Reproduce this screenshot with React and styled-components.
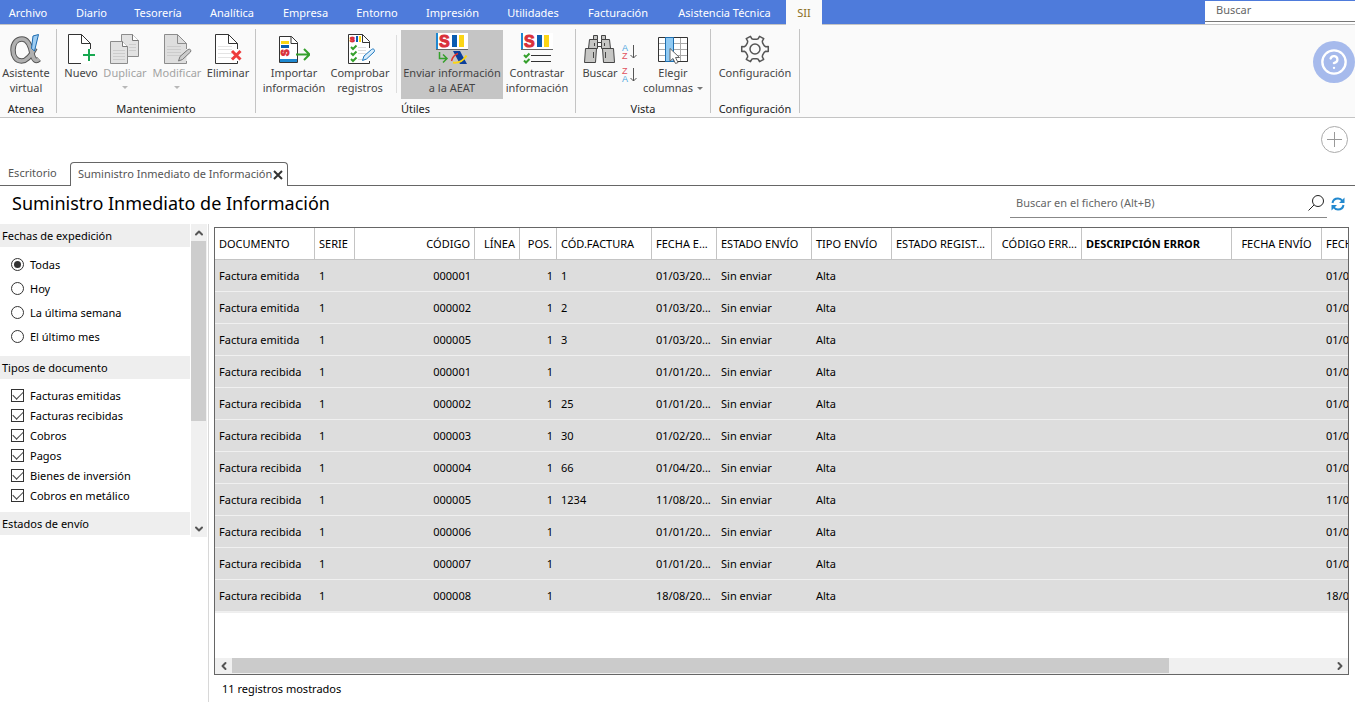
import React from 'react';
import styled, { createGlobalStyle, css } from 'styled-components';
import { CircleHelp, ChevronUp, ChevronDown, ChevronLeft, ChevronRight } from 'lucide-react';

const GlobalStyle = createGlobalStyle`
  * { box-sizing: border-box; }
  body {
    margin: 0;
    background: #fff;
    color: #000;
    font: 11px/15px "Noto Sans", "Open Sans", sans-serif;
  }
  button, input { font: inherit; color: inherit; }
  button { padding: 0; border: 0; background: none; cursor: pointer; }
`;

const Page = styled.div`
  display: flex;
  flex-direction: column;
  min-height: 100vh;
  overflow: hidden;
`;

/* Menu bar */
const MenuBar = styled.nav`
  display: flex;
  height: 25px;
  background: #4e7bdb;
  border-bottom: 1px solid #c4c4c4;
`;

const MenuTab = styled.button`
  flex: none;
  width: ${(p) => p.$width}px;
  height: 24px;
  color: #fff;
  white-space: nowrap;
  ${(p) => p.$first && css`padding-right: 6px;`}
  ${(p) => p.$active && css`
    height: 25px;
    background: #fafafa;
    color: #8a6d1c;
  `}
`;

const MenuSearch = styled.input`
  width: 150px;
  height: 21px;
  margin: 1px 0 0 auto;
  padding: 0 11px 3px;
  border: 0;
  border-bottom: 1px solid #777;
  border-radius: 0;
  box-shadow: 0 2px 0 #fff;
  background: #fff;
  outline: 0;
  &::placeholder { color: #666; opacity: 1; }
`;

/* Ribbon */
const Ribbon = styled.header`
  display: flex;
  height: 93px;
  background: #fafafa;
  border-bottom: 1px solid #c4c4c4;
`;

const Group = styled.section`
  display: flex;
  flex-direction: column;
  flex: none;
  padding: 5px ${(p) => (p.$edge ? '5px 0 1px' : '4px 0')};
`;

const GroupItems = styled.div`
  display: flex;
  height: 69px;
`;

const GroupTitle = styled.h2`
  margin: 2px 0 0;
  font-size: 11px;
  font-weight: 400;
  line-height: 15px;
  text-align: center;
  color: #222;
`;

const Divider = styled.span`
  flex: none;
  width: 1px;
  margin: ${(p) => (p.$inner ? '5px 4px 6px' : '4px 0')};
  background: ${(p) => (p.$inner ? '#ddd' : '#c4c4c4')};
`;

const Tool = styled.button`
  display: flex;
  flex-direction: column;
  align-items: center;
  flex: none;
  width: ${(p) => p.$width}px;
  padding-top: 3px;
  color: #444;
  white-space: nowrap;
  background: ${(p) => (p.$active ? '#c5c5c5' : 'transparent')};
  &:disabled { color: #a3a3a3; cursor: default; }
  svg { flex: none; }
`;

const Caret = styled.i`
  display: inline-block;
  margin: ${(p) => (p.$below ? '6px 0 0' : '0 0 2px 4px')};
  border: 3px solid transparent;
  border-top-color: ${(p) => (p.$below ? '#b8b8b8' : '#777')};
  border-bottom: 0;
`;

const SortTools = styled.div`
  display: flex;
  flex-direction: column;
  gap: 7px;
  width: 20px;
  padding-top: 14px;
  button { height: 16px; }
  svg { display: block; }
`;

const HelpButton = styled.button`
  display: grid;
  place-items: center;
  width: 42px;
  height: 42px;
  margin: 16px 0 0 auto;
  border-radius: 50%;
  background: #a6baec;
  color: #fff;
`;

/* Document tabs */
const TabStrip = styled.div`
  display: flex;
  justify-content: space-between;
  height: 68px;
  border-bottom: 1px solid #666;
`;

const DocTabs = styled.div`
  display: flex;
  align-items: flex-end;
`;

const DocTab = styled.button`
  display: flex;
  align-items: center;
  gap: 1px;
  height: 23px;
  padding: 0 4px 2px 7px;
  color: #555;
  white-space: nowrap;
  svg { flex: none; margin-top: 2px; }
  ${(p) => p.$home && css`width: 70px; padding-left: 8px;`}
  ${(p) => p.$active && css`
    height: 24px;
    width: 218px;
    margin-bottom: -1px;
    border: 1px solid #666;
    border-bottom: 0;
    border-radius: 4px 4px 0 0;
    background: #fff;
  `}
`;

const AddButton = styled.button`
  width: 27px;
  height: 27px;
  margin: 8px 7px 0 0;
`;

/* Title row */
const TitleRow = styled.div`
  display: flex;
  justify-content: space-between;
  height: 38px;
  padding: 0 10px 0 12px;
`;

const Title = styled.h1`
  margin: 0;
  font-size: 18px;
  font-weight: 400;
  line-height: 34px;
  white-space: nowrap;
`;

const FileSearch = styled.div`
  display: flex;
  align-items: center;
  gap: 4px;
  height: 32px;
`;

const SearchField = styled.label`
  display: flex;
  align-items: center;
  width: 317px;
  height: 32px;
  padding: 2px 3px 0 6px;
  border-bottom: 1px solid #888;
  input {
    flex: 1;
    min-width: 0;
    padding: 0;
    border: 0;
    outline: 0;
    background: none;
  }
  input::placeholder { color: #666; opacity: 1; }
`;

const RefreshButton = styled.button`
  height: 28px;
  padding-top: 6px;
`;

/* Work area */
const Work = styled.main`
  display: flex;
  flex: 1;
`;

const Sidebar = styled.aside`
  display: flex;
  align-items: flex-start;
  flex: none;
  width: 209px;
  border-right: 1px solid #d8d8d8;
`;

const Filters = styled.form`
  flex: none;
  width: 190px;
`;

const FilterGroup = styled.fieldset`
  margin: 0;
  padding: 0;
  border: 0;
  min-width: 0;
`;

const FilterTitle = styled.legend`
  width: 100%;
  padding: 0 2px;
  background: #eee;
  line-height: 23px;
`;

const FilterList = styled.div`
  padding: ${(p) => (p.$boxes ? '6px 11px 7px' : '5px 11px 8px')};
`;

const Option = styled.label`
  display: flex;
  align-items: center;
  gap: 6px;
  height: ${(p) => (p.$boxes ? 20 : 24)}px;
  input {
    appearance: none;
    display: grid;
    place-items: center;
    flex: none;
    width: 13px;
    height: 13px;
    margin: 0;
    border: 1px solid #333;
    background: #fff;
  }
  input[type='radio'] { border-radius: 50%; }
  input[type='radio']:checked::after {
    content: '';
    width: 7px;
    height: 7px;
    border-radius: 50%;
    background: #333;
  }
  input[type='checkbox']:checked::after {
    content: '';
    width: 9px;
    height: 5px;
    margin-bottom: 3px;
    border: solid #444;
    border-width: 0 0 1px 1px;
    transform: rotate(-45deg);
  }
`;

const VerticalBar = styled.div`
  display: flex;
  flex-direction: column;
  width: 16px;
  height: 313px;
  margin-left: 1px;
  background: #f0f0f0;
`;

const BarButton = styled.button`
  display: grid;
  place-items: center;
  flex: none;
  width: ${(p) => (p.$wide ? 17 : 15)}px;
  height: ${(p) => (p.$wide ? 15 : 17)}px;
  color: #555;
`;

const VerticalThumb = styled.div`
  width: 15px;
  height: 180px;
  margin-bottom: auto;
  background: #cdcdcd;
`;

const Results = styled.section`
  display: flex;
  flex-direction: column;
  flex: 1;
  min-width: 0;
  padding: 3px 6px 0 5px;
`;

const GridBox = styled.div`
  display: flex;
  flex-direction: column;
  flex: 1;
  overflow: hidden;
  border: 1px solid #666;
`;

const GridView = styled.div`
  flex: 1;
  overflow: hidden;
`;

const Table = styled.table`
  width: 1196px;
  table-layout: fixed;
  border-collapse: separate;
  border-spacing: 0;
  border-bottom: 1px solid #eee;
`;

const HeadCell = styled.th`
  height: 32px;
  padding: 0 4px;
  border-right: 1px solid #c4c4c4;
  border-bottom: 1px solid #c4c4c4;
  font-weight: ${(p) => (p.$bold ? 700 : 400)};
  text-align: ${(p) => p.$align || 'left'};
  white-space: nowrap;
  overflow: hidden;
`;

const Cell = styled.td`
  height: 32px;
  padding: 0 4px;
  border-bottom: 1px solid #f0f0f0;
  background: #ddd;
  text-align: ${(p) => p.$align || 'left'};
  white-space: nowrap;
  overflow: hidden;
`;

const HorizontalBar = styled.div`
  display: flex;
  height: 16px;
  background: #f0f0f0;
`;

const HorizontalTrack = styled.div`
  flex: 1;
`;

const HorizontalThumb = styled.div`
  width: 85.3%;
  height: 15px;
  background: #cbcbcb;
`;

const Status = styled.p`
  margin: 0;
  padding: 0 8px;
  line-height: 27px;
`;

/* Icons */
const Icon = ({ children, size = 32, height }) => (
  <svg width={size} height={height || size} viewBox={`0 0 ${size} ${height || size}`} fill="none" aria-hidden="true">
    {children}
  </svg>
);

const Lines = ({ x, x2, ys, color = '#ddd' }) =>
  ys.map((y) => <path key={y} d={`M${x} ${y}H${x2}`} stroke={color} />);

const Sheet = ({ stroke = '#333', fill = '#fff', open = false }) => (
  <g stroke={stroke}>
    <path d="M3.5 1.5H16.5L25.5 10.5V30.5H3.5Z" fill={fill} stroke="none" />
    <path d={open ? 'M16 30.5H3.5V1.5H16.5L25.5 10.5V16' : 'M25.5 28V30.5H3.5V1.5H16.5L25.5 10.5V16'} />
    <path d="M16.5 1.5V10.5H25.5" />
  </g>
);

const SiiBars = () => (
  <>
    <rect width="32" height="17" fill="#fff" />
    <rect width="2" height="17" fill="#1e88d0" />
    <path d="M0 16.5H32" stroke="#666" />
    <text x="3" y="14" fontFamily="Liberation Sans, sans-serif" fontWeight="700" fontSize="16" fill="#d9303a" stroke="#d9303a" strokeWidth="1">S</text>
    <rect x="16" y="2" width="5" height="12" fill="#0a5cb0" />
    <rect x="23" y="2" width="5" height="12" fill="#fbd515" />
  </>
);

const alphaCurve = 'M25 15C21.5 22 17.5 28 11.5 28C6 28 3 23 3 17C3 10.500 6.500 6 12 6C18 6 20.500 13 22 20.500C23.500 27 26 29 29 26';

const AlphaIcon = () => (
  <Icon>
    <path d={alphaCurve} stroke="#555" strokeWidth="5.500" />
    <path d={alphaCurve} stroke="#b0b0b0" strokeWidth="3.500" />
    <path d="M23 3L28.500 1.500L24.500 18L21.500 15.500Z" fill="#9fcdf2" stroke="#1c6bb0" />
  </Icon>
);

const NewIcon = () => (
  <Icon>
    <Sheet open />
    <path d="M24 16V28M18 22H30" stroke="#18a851" strokeWidth="2" />
  </Icon>
);

const DuplicateIcon = () => (
  <Icon>
    <path d="M12.500 1.500H23.500L29.500 7.500V23.500H12.500Z" fill="#e2e2e2" stroke="#8c8c8c" />
    <path d="M23.500 1.500V7.500H29.500" fill="#fff" stroke="#777" />
    <Lines x={20} x2={27} ys={[11.5, 14.5, 17.5]} color="#ccc" />
    <path d="M1.500 8.500H13.500L18.500 13.500V30.500H1.500Z" fill="#e2e2e2" stroke="#8c8c8c" />
    <path d="M13.500 8.500V13.500H18.500" fill="#fff" stroke="#777" />
    <Lines x={4} x2={16} ys={[17.5, 20.5, 23.5, 26.5]} color="#ccc" />
  </Icon>
);

const EditIcon = () => (
  <Icon>
    <Sheet stroke="#8c8c8c" fill="#dedede" />
    <Lines x={6} x2={20} ys={[13.5, 16.5, 19.5, 22.5]} color="#ccc" />
    <path d="M17.500 28L19 23.500L27 16.500C29 15.500 30.500 17 29.500 19L21.500 26.500Z" fill="#ccc" stroke="#777" />
  </Icon>
);

const DeleteIcon = () => (
  <Icon>
    <Sheet />
    <Lines x={6} x2={20} ys={[13.5, 16.5, 20.5, 24.5]} color="#e4e4e4" />
    <path d="M20 18L28.500 26.500M28.500 18L20 26.500" stroke="#ee3b3b" strokeWidth="3" />
  </Icon>
);

const ImportIcon = () => (
  <Icon>
    <path d="M1.500 3.500H13.500L19.500 9.500V29.500H1.500Z" fill="#fff" stroke="#333" />
    <path d="M13 3.500V10.500H19.500" stroke="#333" />
    <rect x="2" y="26" width="17" height="3" fill="#1e88d0" />
    <rect x="3" y="8" width="8" height="3" fill="#fbd515" />
    <rect x="3" y="12" width="8" height="3" fill="#0a5cb0" />
    <text transform="translate(11 23) rotate(-90)" fontFamily="Liberation Sans, sans-serif" fontWeight="700" fontSize="10" fill="#d9303a" stroke="#d9303a" strokeWidth="1">S</text>
    <path d="M18 21.500H31M26 16L31.500 21.500L26 27" stroke="#35a02c" strokeWidth="2" />
  </Icon>
);

const CheckIcon = () => (
  <Icon>
    <path d="M4.500 1.500H18.500L25.500 8.500V30.500H4.500Z" fill="#fff" />
    <path d="M25.500 28V30.500H4.500V1.500H18.500L25.500 8.500V15M18.500 1.500V9.500H25.500" stroke="#333" />
    <text x="6" y="9" fontFamily="Liberation Sans, sans-serif" fontWeight="700" fontSize="7" fill="#d9303a" stroke="#d9303a">S</text>
    <rect x="12" y="3" width="2" height="6" fill="#0a5cb0" />
    <rect x="15" y="3" width="2" height="6" fill="#fbd515" />
    <path d="M7 14L9 16L12.500 12.500M7 20L9 22L12.500 18.500M7 26L9 28L12.500 24.500" stroke="#35a02c" strokeWidth="2" />
    <Lines x={14} x2={22} ys={[14.5, 17.5, 20.5, 26.5]} />
    <path d="M18.500 27.500L20 23L27.500 16.500C29.500 15 31.500 17 30 19L22.500 26Z" fill="#d9edfb" stroke="#1e78c0" />
  </Icon>
);

const SendIcon = () => (
  <Icon>
    <SiiBars />
    <path d="M3.500 19V25.500H10.500M7 21.500L11 25.500L7 29.500" stroke="#35a02c" strokeWidth="1.500" />
    <path d="M17 18H24L31 31H24Z" fill="#0b3f9c" />
    <path d="M15.500 28C16.500 24 19 21.500 22 20.500" stroke="#e2342d" strokeWidth="1.500" />
    <path d="M17 29.500C23 30.500 28 27 30.500 22.500" stroke="#fbd515" strokeWidth="2" />
  </Icon>
);

const ContrastIcon = () => (
  <Icon>
    <SiiBars />
    <path d="M3 22L5 24L8.500 20.500M3 27.500L5 29.500L8.500 26" stroke="#35a02c" strokeWidth="2" />
    <path d="M10 22.500H30M10 28.500H30" stroke="#333" />
  </Icon>
);

const BinocularsIcon = () => (
  <Icon>
    <g fill="#c6c6c4" stroke="#444">
      <path d="M9.500 2.500H13.500V6.500H9.500ZM17.500 2.500H21.500V6.500H17.500Z" />
      <path d="M13.500 9.500H17.500V13.500H13.500Z" fill="#fff" />
      <path d="M5.500 6.500H13.500V15.500H4.500ZM17.500 6.500H25.500L26.500 15.500H17.500Z" />
      <path d="M1.500 15.500H12.500L11.500 29.500H0.500ZM18.500 15.500H29.500L30.500 29.500H19.500Z" />
      <path d="M9.500 19V25M21.500 19V25M10.500 10V13M20.500 10V13" />
    </g>
  </Icon>
);

const SortIcon = ({ top, bottom }) => {
  const tint = { A: '#4aa3de', Z: '#e0505e' };
  return (
    <Icon size={18} height={16}>
      <text x="2" y="7" fontFamily="Liberation Sans, sans-serif" fontSize="9" fill={tint[top]}>{top}</text>
      <text x="2" y="15" fontFamily="Liberation Sans, sans-serif" fontSize="9" fill={tint[bottom]}>{bottom}</text>
      <path d="M13.500 1V14M10.500 11L13.500 14L16.500 11" stroke="#555" />
    </Icon>
  );
};

const ColumnsIcon = () => (
  <Icon>
    <path d="M1.500 4.500H30.500V28.500H1.500Z" fill="#fff" />
    <path d="M1 10.500H31M1 16.500H31M1 22.500H31M23.500 4V29" stroke="#aaa" />
    <path d="M30.500 22V28.500M1.500 4.500H30.500V28.500H1.500Z" stroke="#333" />
    <path d="M8.500 4.500H16.500V28.500H8.500Z" fill="#90caf3" stroke="#1e6fb0" />
    <path d="M13 15.500V28L16 25.500L18.500 30.500L21 29.500L18.500 24.500H22.500Z" fill="#fff" stroke="#666" />
  </Icon>
);

/* Six broad teeth, with the first pointing to the right */
const gearPath = (() => {
  const points = [];
  for (let i = 0; i < 6; i += 1) {
    const a = (i * Math.PI) / 3;
    [[-0.36, 9.8], [-0.22, 10.8], [-0.18, 13.5], [0.18, 13.5], [0.22, 10.8], [0.36, 9.8]].forEach(([d, r]) => {
      points.push(`${(16 + r * Math.cos(a + d)).toFixed(2)} ${(16 + r * Math.sin(a + d)).toFixed(2)}`);
    });
  }
  return `M${points.join('L')}Z`;
})();

const GearIcon = () => (
  <Icon>
    <path d={gearPath} stroke="#555" strokeWidth="1.500" strokeLinejoin="round" />
    <circle cx="16" cy="16" r="5" stroke="#555" strokeWidth="1.500" />
  </Icon>
);

const menu = [
  ['Archivo', 62], ['Diario', 59], ['Tesorería', 74], ['Analítica', 74], ['Empresa', 73], ['Entorno', 70],
  ['Impresión', 81], ['Utilidades', 80], ['Facturación', 90], ['Asistencia Técnica', 123], ['SII', 36],
];

const columns = [
  ['DOCUMENTO', 100], ['SERIE', 40], ['CÓDIGO', 120, 'right'], ['LÍNEA', 45, 'right'], ['POS.', 37, 'right'],
  ['CÓD.FACTURA', 95], ['FECHA E...', 65], ['ESTADO ENVÍO', 95], ['TIPO ENVÍO', 80], ['ESTADO REGIST...', 100],
  ['CÓDIGO ERR...', 90, 'right'], ['DESCRIPCIÓN ERROR', 150], ['FECHA ENVÍO', 90, 'center'], ['FECHA REGISTRO', 109],
];

const records = [
  ['emitida', '000001', '1', '01/03'], ['emitida', '000002', '2', '01/03'], ['emitida', '000005', '3', '01/03'],
  ['recibida', '000001', '', '01/01'], ['recibida', '000002', '25', '01/01'], ['recibida', '000003', '30', '01/02'],
  ['recibida', '000004', '66', '01/04'], ['recibida', '000005', '1234', '11/08'], ['recibida', '000006', '', '01/01'],
  ['recibida', '000007', '', '01/01'], ['recibida', '000008', '', '18/08'],
];

const periods = ['Todas', 'Hoy', 'La última semana', 'El último mes'];
const documentTypes = ['Facturas emitidas', 'Facturas recibidas', 'Cobros', 'Pagos', 'Bienes de inversión', 'Cobros en metálico'];

const ToolButton = ({ icon, lines, width, active, disabled, menuBelow, menuInline }) => (
  <Tool type="button" $width={width} $active={active} disabled={disabled}>
    {icon}
    <span>{lines[0]}</span>
    {lines[1] && <span>{lines[1]}{menuInline && <Caret />}</span>}
    {menuBelow && <Caret $below />}
  </Tool>
);

export default function App() {
  return (
    <>
      <GlobalStyle />
      <Page>
        <MenuBar>
          {menu.map(([name, width], i) => (
            <MenuTab key={name} type="button" $width={width} $first={i === 0} $active={name === 'SII'}>{name}</MenuTab>
          ))}
          <MenuSearch type="text" placeholder="Buscar" aria-label="Buscar" />
        </MenuBar>

        <Ribbon>
          <Group $edge>
            <GroupItems>
              <ToolButton icon={<AlphaIcon />} lines={['Asistente', 'virtual']} width={50} />
            </GroupItems>
            <GroupTitle>Atenea</GroupTitle>
          </Group>
          <Divider />
          <Group>
            <GroupItems>
              <ToolButton icon={<NewIcon />} lines={['Nuevo']} width={40} />
              <ToolButton icon={<DuplicateIcon />} lines={['Duplicar']} width={48} disabled menuBelow />
              <ToolButton icon={<EditIcon />} lines={['Modificar']} width={56} disabled menuBelow />
              <ToolButton icon={<DeleteIcon />} lines={['Eliminar']} width={46} />
            </GroupItems>
            <GroupTitle>Mantenimiento</GroupTitle>
          </Group>
          <Divider />
          <Group>
            <GroupItems>
              <ToolButton icon={<ImportIcon />} lines={['Importar', 'información']} width={68} />
              <ToolButton icon={<CheckIcon />} lines={['Comprobar', 'registros']} width={64} />
              <Divider $inner />
              <ToolButton icon={<SendIcon />} lines={['Enviar información', 'a la AEAT']} width={102} active />
              <ToolButton icon={<ContrastIcon />} lines={['Contrastar', 'información']} width={68} />
            </GroupItems>
            <GroupTitle>Útiles</GroupTitle>
          </Group>
          <Divider />
          <Group>
            <GroupItems>
              <ToolButton icon={<BinocularsIcon />} lines={['Buscar']} width={40} />
              <SortTools>
                <button type="button" aria-label="Orden ascendente"><SortIcon top="A" bottom="Z" /></button>
                <button type="button" aria-label="Orden descendente"><SortIcon top="Z" bottom="A" /></button>
              </SortTools>
              <ToolButton icon={<ColumnsIcon />} lines={['Elegir', 'columnas']} width={66} menuInline />
            </GroupItems>
            <GroupTitle>Vista</GroupTitle>
          </Group>
          <Divider />
          <Group>
            <GroupItems>
              <ToolButton icon={<GearIcon />} lines={['Configuración']} width={80} />
            </GroupItems>
            <GroupTitle>Configuración</GroupTitle>
          </Group>
          <Divider />
          <HelpButton type="button" aria-label="Ayuda"><CircleHelp size={28} strokeWidth={2} /></HelpButton>
        </Ribbon>

        <TabStrip>
          <DocTabs>
            <DocTab type="button" $home>Escritorio</DocTab>
            <DocTab type="button" $active>
              Suministro Inmediato de Información
              <Icon size={10}>
                <path d="M1 1L9 9M9 1L1 9" stroke="#333" strokeWidth="2" />
              </Icon>
            </DocTab>
          </DocTabs>
          <AddButton type="button" aria-label="Añadir">
            <Icon size={27}>
              <circle cx="13.500" cy="13.500" r="13" stroke="#aaa" />
              <path d="M13.500 6V21M6 13.500H21" stroke="#999" />
            </Icon>
          </AddButton>
        </TabStrip>

        <TitleRow>
          <Title>Suministro Inmediato de Información</Title>
          <FileSearch>
            <SearchField>
              <input type="text" placeholder="Buscar en el fichero (Alt+B)" aria-label="Buscar en el fichero" />
              <Icon size={16}>
                <circle cx="10" cy="6" r="5.500" stroke="#222" />
                <path d="M6 10L0.500 15.500" stroke="#222" />
              </Icon>
            </SearchField>
            <RefreshButton type="button" aria-label="Actualizar">
              <Icon size={14}>
                <path d="M1.500 6C2 3 4.500 1.500 7 1.500C9 1.500 10.500 2.500 11.500 4M12.500 8C12 11 9.500 12.500 7 12.500C5 12.500 3.500 11.500 2.500 10" stroke="#2389cf" strokeWidth="2" />
                <path d="M13.500 0.500V6H8ZM0.500 13.500V8H6Z" fill="#2389cf" />
              </Icon>
            </RefreshButton>
          </FileSearch>
        </TitleRow>

        <Work>
          <Sidebar>
            <Filters>
              <FilterGroup>
                <FilterTitle>Fechas de expedición</FilterTitle>
                <FilterList>
                  {periods.map((name, i) => (
                    <Option key={name}><input type="radio" name="period" defaultChecked={i === 0} />{name}</Option>
                  ))}
                </FilterList>
              </FilterGroup>
              <FilterGroup>
                <FilterTitle>Tipos de documento</FilterTitle>
                <FilterList $boxes>
                  {documentTypes.map((name) => (
                    <Option key={name} $boxes><input type="checkbox" defaultChecked />{name}</Option>
                  ))}
                </FilterList>
              </FilterGroup>
              <FilterGroup>
                <FilterTitle>Estados de envío</FilterTitle>
              </FilterGroup>
            </Filters>
            <VerticalBar>
              <BarButton type="button" aria-label="Subir"><ChevronUp size={12} strokeWidth={4} /></BarButton>
              <VerticalThumb />
              <BarButton type="button" aria-label="Bajar"><ChevronDown size={12} strokeWidth={4} /></BarButton>
            </VerticalBar>
          </Sidebar>

          <Results>
            <GridBox>
              <GridView>
                <Table>
                  <colgroup>
                    {columns.map(([name, width]) => <col key={name} width={width} />)}
                  </colgroup>
                  <thead>
                    <tr>
                      {columns.map(([name, , align]) => (
                        <HeadCell key={name} $align={align} $bold={name === 'DESCRIPCIÓN ERROR'}>{name}</HeadCell>
                      ))}
                    </tr>
                  </thead>
                  <tbody>
                    {records.map(([kind, code, invoice, date]) => (
                      <tr key={kind + code}>
                        <Cell>Factura {kind}</Cell>
                        <Cell>1</Cell>
                        <Cell $align="right">{code}</Cell>
                        <Cell />
                        <Cell $align="right">1</Cell>
                        <Cell>{invoice}</Cell>
                        <Cell>{date}/20...</Cell>
                        <Cell>Sin enviar</Cell>
                        <Cell>Alta</Cell>
                        <Cell />
                        <Cell />
                        <Cell />
                        <Cell />
                        <Cell>{date}/20...</Cell>
                      </tr>
                    ))}
                  </tbody>
                </Table>
              </GridView>
              <HorizontalBar>
                <BarButton type="button" $wide aria-label="Izquierda"><ChevronLeft size={12} strokeWidth={4} /></BarButton>
                <HorizontalTrack><HorizontalThumb /></HorizontalTrack>
                <BarButton type="button" $wide aria-label="Derecha"><ChevronRight size={12} strokeWidth={4} /></BarButton>
              </HorizontalBar>
            </GridBox>
            <Status>11 registros mostrados</Status>
          </Results>
        </Work>
      </Page>
    </>
  );
}
